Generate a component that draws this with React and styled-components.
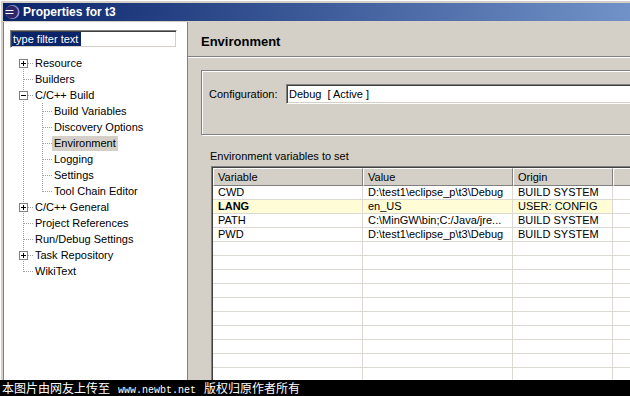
import React from "react";
import styled, { createGlobalStyle } from "styled-components";

const GlobalStyle = createGlobalStyle`
  html, body {
    margin: 0;
    padding: 0;
    overflow: hidden;
  }
  body {
    background: #d4d0c8;
    font-family: "Liberation Sans", Arial, sans-serif;
    font-size: 11px;
    color: #000;
  }
`;

//Frame
const Screen = styled.div`
  width: 630px;
  height: 396px;
  overflow: hidden;
  display: flex;
  flex-direction: column;
  background: #d4d0c8;
`;

const Window = styled.div`
  flex: 1;
  min-height: 0;
  display: flex;
  flex-direction: column;
  padding: 3px 0 0 3px;
  box-shadow: inset 1px 1px 0 #fff;
`;

const TitleBar = styled.div`
  flex: none;
  height: 18px;
  display: flex;
  align-items: center;
  gap: 3px;
  padding-left: 1px;
  background: linear-gradient(to right, #0a246a, #7192c8);
  color: #fff;
  font-size: 12px;
  font-weight: bold;
`;

const Main = styled.div`
  flex: 1;
  min-height: 0;
  display: flex;
  margin-top: 1px;
`;

//Left side tree
const NavPanel = styled.div`
  flex: none;
  width: 185px;
  box-sizing: border-box;
  background: #fff;
  border-left: 1px solid #808080;
  border-right: 1px solid #808080;
  padding: 8px 0 0 6px;
`;

const FilterBox = styled.div`
  width: 167px;
  height: 18px;
  box-sizing: border-box;
  padding: 1px;
  border: 1px solid;
  border-color: #808080 #fff #fff #808080;
  box-shadow: inset 1px 1px 0 #404040, inset -1px -1px 0 #d4d0c8;
  display: flex;
  align-items: center;
`;

const Selection = styled.span`
  background: #0a246a;
  color: #fff;
  line-height: 14px;
  padding: 0 3px 0 1px;
`;

const Tree = styled.div`
  margin: 7px 0 0 4px;
`;

const TreeRow = styled.div`
  display: flex;
  align-items: center;
  height: 16px;
`;

const GuideSvg = styled.svg`
  flex: none;
  display: block;
`;

const TreeLabel = styled.span`
  padding: 0 2px;
  line-height: 15px;
  white-space: nowrap;
  background: ${(p) => (p.$selected ? "#d4d0c8" : "transparent")};
`;

//Right side
const Content = styled.div`
  flex: 1;
  min-width: 0;
  display: flex;
  flex-direction: column;
  margin-right: -24px;
`;

const PageHeader = styled.div`
  padding: 12px 0 6px 13px;
  font-size: 13px;
  font-weight: bold;
  line-height: 16px;
  border-bottom: 1px solid #808080;
  box-shadow: 0 1px 0 #fff;
`;

const GroupBox = styled.div`
  margin: 13px 0 0 13px;
  height: 65px;
  box-sizing: border-box;
  border: 1px solid #808080;
  box-shadow: inset 1px 1px 0 #fff, 1px 1px 0 #fff;
  padding: 13px 0 0 7px;
  display: flex;
`;

const ConfigRow = styled.div`
  flex: 1;
  display: flex;
  align-items: center;
  align-self: flex-start;
`;

const FieldLabel = styled.span`
  flex: none;
  width: 77px;
`;

const Combo = styled.div`
  flex: 1;
  height: 20px;
  box-sizing: border-box;
  padding: 1px 1px 1px 2px;
  border: 1px solid;
  border-color: #808080 #fff #fff #808080;
  box-shadow: inset 1px 1px 0 #404040, inset -1px -1px 0 #d4d0c8;
  background: #fff;
  display: flex;
  align-items: center;
  white-space: pre;
`;

const SectionLabel = styled.div`
  margin: 14px 0 3px 22px;
  line-height: 14px;
`;

const Table = styled.div`
  flex: 1;
  min-height: 0;
  overflow: hidden;
  margin-left: 23px;
  padding: 1px 0 0 1px;
  border-top: 1px solid #808080;
  border-left: 1px solid #808080;
  box-shadow: inset 1px 1px 0 #404040;
  background: #fff;
`;

const HeaderRow = styled.div`
  display: flex;
  height: 18px;
`;

const HeaderCell = styled.div`
  box-sizing: border-box;
  width: ${(p) => (p.$w ? `${p.$w}px` : "auto")};
  flex: ${(p) => (p.$w ? "none" : "1")};
  padding-left: 4px;
  line-height: 16px;
  background: #d4d0c8;
  border-top: 1px solid #fff;
  border-left: 1px solid #fff;
  border-right: 1px solid #808080;
  border-bottom: 1px solid #808080;
`;

const Row = styled.div`
  display: flex;
  height: 14px;
`;

const Cell = styled.div`
  box-sizing: border-box;
  width: ${(p) => (p.$w ? `${p.$w}px` : "auto")};
  flex: ${(p) => (p.$w ? "none" : "1")};
  padding-left: 5px;
  line-height: 13px;
  white-space: nowrap;
  overflow: hidden;
  font-weight: ${(p) => (p.$bold ? "bold" : "normal")};
  background: ${(p) => (p.$marked ? "#fffcd6" : "#fff")};
  border-right: 1px solid #dcd9d3;
  border-bottom: 1px solid #dcd9d3;
`;

const Watermark = styled.div`
  flex: none;
  height: 16px;
  padding-left: 2px;
  background: #000;
  color: #fff;
  font-family: "Noto Sans CJK SC", sans-serif;
  font-size: 12px;
  line-height: 16px;
  white-space: nowrap;
`;

const Url = styled.span`
  font-family: "Liberation Mono", monospace;
  font-size: 10px;
  margin: 0 8px;
`;

//Data
const treeItems = [
  ["Resource", 0, "bottom", "plus"],
  ["Builders", 0, "full"],
  ["C/C++ Build", 0, "full", "minus"],
  ["Build Variables", 1, "full"],
  ["Discovery Options", 1, "full"],
  ["Environment", 1, "full", null, true],
  ["Logging", 1, "full"],
  ["Settings", 1, "full"],
  ["Tool Chain Editor", 1, "top"],
  ["C/C++ General", 0, "full", "plus"],
  ["Project References", 0, "full"],
  ["Run/Debug Settings", 0, "full"],
  ["Task Repository", 0, "full", "plus"],
  ["WikiText", 0, "top"],
];

const columns = [
  { title: "Variable", w: 150 },
  { title: "Value", w: 150 },
  { title: "Origin", w: 100 },
];

const envVars = [
  ["CWD", "D:\\test1\\eclipse_p\\t3\\Debug", "BUILD SYSTEM"],
  ["LANG", "en_US", "USER: CONFIG", true],
  ["PATH", "C:\\MinGW\\bin;C:/Java/jre...", "BUILD SYSTEM"],
  ["PWD", "D:\\test1\\eclipse_p\\t3\\Debug", "BUILD SYSTEM"],
];

const EMPTY_ROWS = 10;

//Drawings
const EclipseIcon = () => (
  <svg width="16" height="16" viewBox="0 0 16 16">
    <circle cx="8.5" cy="8" r="7" fill="#9a90d0" />
    <circle cx="7.6" cy="8" r="6.3" fill="#2f2666" />
    <rect x="1.5" y="6" width="8" height="1" fill="#fff" />
    <rect x="1.5" y="9" width="8" height="1" fill="#fff" />
  </svg>
);

const Guide = ({ line, branch, box }) => (
  <GuideSvg width="19" height="16" viewBox="0 0 19 16" shapeRendering="crispEdges">
    {line && (
      <line
        x1="9.5"
        x2="9.5"
        y1={line === "bottom" ? 8 : 0}
        y2={line === "top" ? 9 : 16}
        stroke="#a0a0a0"
        strokeDasharray="1 1"
      />
    )}
    {branch && (
      <line x1="10" x2="19" y1="8.5" y2="8.5" stroke="#a0a0a0" strokeDasharray="1 1" />
    )}
    {box && (
      <g>
        <rect x="5.5" y="4.5" width="8" height="8" fill="#fff" stroke="#808080" />
        <line x1="7" x2="12" y1="8.5" y2="8.5" stroke="#000" />
        {box === "plus" && <line x1="9.5" x2="9.5" y1="6" y2="11" stroke="#000" />}
      </g>
    )}
  </GuideSvg>
);

const App = () => {
  return (
    <Screen>
      <GlobalStyle />
      <Window>
        <TitleBar>
          <EclipseIcon />
          <span>Properties for t3</span>
        </TitleBar>
        <Main>
          <NavPanel>
            <FilterBox>
              <Selection>type filter text</Selection>
            </FilterBox>
            <Tree>
              {treeItems.map(([label, depth, line, box, selected]) => (
                <TreeRow key={label}>
                  {depth > 0 && <Guide line="full" />}
                  <Guide line={line} branch box={box} />
                  <TreeLabel $selected={selected}>{label}</TreeLabel>
                </TreeRow>
              ))}
            </Tree>
          </NavPanel>

          <Content>
            <PageHeader>Environment</PageHeader>
            <GroupBox>
              <ConfigRow>
                <FieldLabel>Configuration:</FieldLabel>
                <Combo>Debug  [ Active ]</Combo>
              </ConfigRow>
            </GroupBox>
            <SectionLabel>Environment variables to set</SectionLabel>
            <Table>
              <HeaderRow>
                {columns.map((col) => (
                  <HeaderCell key={col.title} $w={col.w}>
                    {col.title}
                  </HeaderCell>
                ))}
                <HeaderCell />
              </HeaderRow>
              {envVars.map(([name, value, origin, marked]) => (
                <Row key={name}>
                  <Cell $w={150} $marked={marked} $bold={marked}>
                    {name}
                  </Cell>
                  <Cell $w={150} $marked={marked}>{value}</Cell>
                  <Cell $w={100} $marked={marked}>{origin}</Cell>
                  <Cell />
                </Row>
              ))}
              {Array.from({ length: EMPTY_ROWS }).map((_, i) => (
                <Row key={i}>
                  <Cell $w={150} />
                  <Cell $w={150} />
                  <Cell $w={100} />
                  <Cell />
                </Row>
              ))}
            </Table>
          </Content>
        </Main>
      </Window>
      <Watermark>
        本图片由网友上传至<Url>www.newbt.net</Url>版权归原作者所有
      </Watermark>
    </Screen>
  );
};

export default App;
